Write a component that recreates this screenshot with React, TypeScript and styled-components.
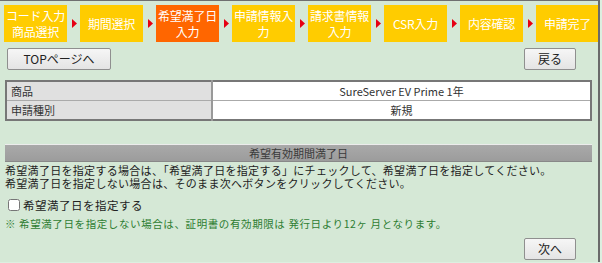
import React from "react"
import styled, { createGlobalStyle } from "styled-components"

const steps = [
  { label: "コード入力\n商品選択", active: false },
  { label: "期間選択", active: false },
  { label: "希望満了日\n入力", active: true },
  { label: "申請情報入\n力", active: false },
  { label: "請求書情報\n入力", active: false },
  { label: "CSR入力", active: false },
  { label: "内容確認", active: false },
  { label: "申請完了", active: false },
]

const rows = [
  { name: "商品", value: "SureServer EV Prime 1年" },
  { name: "申請種別", value: "新規" },
]

export default function App() {
  return (
    <>
      <GlobalStyle />
      <StyledPage>
        <StyledSteps>
          {steps.map((step, i) => (
            <React.Fragment key={i}>
              {i > 0 && (
                <StyledArrow>
                  <svg width="5" height="9" viewBox="0 0 5 9">
                    <polygon points="0,0 5,4.5 0,9" fill="#e60012" />
                  </svg>
                </StyledArrow>
              )}
              <StyledStep active={step.active}>{step.label}</StyledStep>
            </React.Fragment>
          ))}
        </StyledSteps>

        <StyledButtonRow>
          <StyledButton wide>TOPページへ</StyledButton>
          <StyledButton>戻る</StyledButton>
        </StyledButtonRow>

        <StyledTable>
          <tbody>
            {rows.map(row => (
              <tr key={row.name}>
                <StyledLabelCell>{row.name}</StyledLabelCell>
                <StyledValueCell>{row.value}</StyledValueCell>
              </tr>
            ))}
          </tbody>
        </StyledTable>

        <StyledSectionHead>希望有効期間満了日</StyledSectionHead>
        <StyledText>
          希望満了日を指定する場合は、「希望満了日を指定する」にチェックして、希望満了日を指定してください。
          <br />
          希望満了日を指定しない場合は、そのまま次へボタンをクリックしてください。
        </StyledText>

        <StyledCheckLabel>
          <StyledCheckbox type="checkbox" />
          希望満了日を指定する
        </StyledCheckLabel>
        <StyledNote>※ 希望満了日を指定しない場合は、証明書の有効期限は 発行日より12ヶ 月となります。</StyledNote>

        <StyledFooter>
          <StyledButton>次へ</StyledButton>
        </StyledFooter>
      </StyledPage>
    </>
  )
}

const GlobalStyle = createGlobalStyle`
  html, body {
    margin: 0;
    padding: 0;
    background: #dcefe0;
    font-family: "Noto Sans CJK JP", "Noto Sans", sans-serif;
  }
`

const StyledPage = styled.div`
  width: 600px;
  height: 262px;
  background: #d5e8d6;
  border-top: 1px solid #6f6f6f;
  border-right: 2px solid #6a6a6a;
  padding-top: 4px;
  box-sizing: border-box;
  overflow: hidden;
`

const StyledSteps = styled.div`
  display: flex;
  align-items: center;
  padding-left: 4px;
  height: 37px;
`

const StyledStep = styled.div<{ active: boolean }>`
  width: 63px;
  height: 37px;
  flex: none;
  display: flex;
  align-items: center;
  justify-content: center;
  text-align: center;
  white-space: pre;
  background: ${props => (props.active ? "#ff6600" : "#ffcc00")};
  color: #fff;
  font-size: 12px;
  line-height: 16px;
  letter-spacing: -0.2px;
`

const StyledArrow = styled.div`
  width: 12px;
  flex: none;
  display: flex;
  justify-content: center;
  padding-left: 1px;
  svg {
    display: block;
  }
`

const StyledButtonRow = styled.div`
  display: flex;
  justify-content: space-between;
  padding: 0 22px 0 7px;
  margin-top: 6px;
`

const StyledButton = styled.button<{ wide?: boolean }>`
  width: ${props => (props.wide ? "104px" : "52px")};
  height: 22px;
  padding: 0;
  border: 1px solid #8f8f8f;
  border-radius: 2px;
  background: linear-gradient(#f6f6f6, #e4e4e4);
  font-family: "Noto Sans CJK JP", sans-serif;
  font-size: 12px;
  line-height: 18px;
  color: #222;
`

const StyledTable = styled.table`
  width: 587px;
  margin: 10px 0 0 5px;
  border-collapse: collapse;
  border: 2px solid #777;
  font-size: 11px;
  color: #333;

  td {
    height: 18px;
    padding: 0 4px;
    border: 1px solid #aaa;
    line-height: 16px;
  }
`

const StyledLabelCell = styled.td`
  width: 196px;
  background: #e0e0e0;
  border-right: 2px solid #999 !important;
`

const StyledValueCell = styled.td`
  background: #fff;
  text-align: center;
`

const StyledSectionHead = styled.div`
  width: 587px;
  height: 18px;
  margin: 23px 0 0 5px;
  box-sizing: border-box;
  border-top: 1px solid #ececec;
  border-bottom: 1px solid #888;
  background: linear-gradient(#a9a9a9, #9c9c9c);
  text-align: center;
  font-size: 11px;
  line-height: 16px;
  color: #3a3a3a;
`

const StyledText = styled.p`
  margin: 2px 0 0 5px;
  font-size: 11px;
  line-height: 13px;
  letter-spacing: 0.3px;
  color: #222;
`

const StyledCheckLabel = styled.label`
  display: flex;
  align-items: center;
  gap: 3px;
  margin: 8px 0 0 8px;
  font-size: 11.5px;
  line-height: 14px;
  letter-spacing: 0.5px;
  color: #222;
`

const StyledCheckbox = styled.input`
  width: 12px;
  height: 12px;
  margin: 0;
`

const StyledNote = styled.p`
  margin: 5px 0 0 5px;
  font-size: 10.5px;
  line-height: 13px;
  letter-spacing: 0.6px;
  color: #2e7d32;
`

const StyledFooter = styled.div`
  display: flex;
  justify-content: flex-end;
  padding-right: 22px;
  margin-top: 8px;
`
